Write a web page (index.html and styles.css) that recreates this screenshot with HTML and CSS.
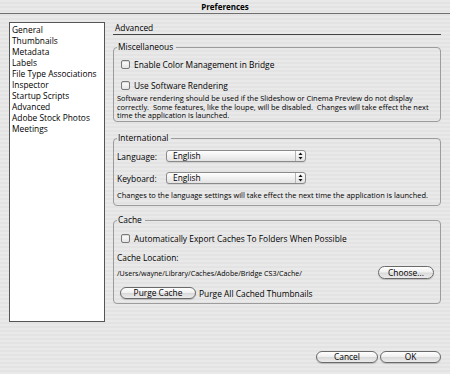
FILE: index.html
```html
<!DOCTYPE html>
<html>

<head>
    <title>Preferences</title>
    <link rel="stylesheet" href="styles.css">
</head>

<body>
    <div id="window">
        <div id="titlebar">Preferences</div>

        <div id="main">
            <ul id="sidebar">
                <li>General</li>
                <li>Thumbnails</li>
                <li>Metadata</li>
                <li>Labels</li>
                <li>File Type Associations</li>
                <li>Inspector</li>
                <li>Startup Scripts</li>
                <li>Advanced</li>
                <li>Adobe Stock Photos</li>
                <li>Meetings</li>
            </ul>

            <div id="panel">
                <div class="panel-title">Advanced</div>

                <fieldset class="group group-misc">
                    <legend>Miscellaneous</legend>
                    <div class="check-row first"><span class="checkbox"></span>Enable Color Management in Bridge</div>
                    <div class="check-row second"><span class="checkbox"></span>Use Software Rendering</div>
                    <p class="note note-misc">Software rendering should be used if the Slideshow or Cinema Preview do not display<br>correctly.&nbsp; Some features, like the loupe, will be disabled.&nbsp; Changes will take effect the next<br>time the application is launched.</p>
                </fieldset>

                <fieldset class="group group-intl">
                    <legend>International</legend>
                    <div class="field-row first">
                        <span class="field-label">Language:</span>
                        <div class="select">
                            <span class="select-value">English</span>
                            <span class="stepper">
                                <svg width="5" height="8" viewBox="0 0 5 8">
                                    <path d="M2.5 0.5 L4.5 3 L0.5 3 Z" fill="#111" />
                                    <path d="M0.5 5 L4.5 5 L2.5 7.5 Z" fill="#111" />
                                </svg>
                            </span>
                        </div>
                    </div>
                    <div class="field-row second">
                        <span class="field-label">Keyboard:</span>
                        <div class="select">
                            <span class="select-value">English</span>
                            <span class="stepper">
                                <svg width="5" height="8" viewBox="0 0 5 8">
                                    <path d="M2.5 0.5 L4.5 3 L0.5 3 Z" fill="#111" />
                                    <path d="M0.5 5 L4.5 5 L2.5 7.5 Z" fill="#111" />
                                </svg>
                            </span>
                        </div>
                    </div>
                    <p class="note note-intl">Changes to the language settings will take effect the next time the application is launched.</p>
                </fieldset>

                <fieldset class="group group-cache">
                    <legend>Cache</legend>
                    <div class="check-row first"><span class="checkbox"></span>Automatically Export Caches To Folders When Possible</div>
                    <div class="cache-label">Cache Location:</div>
                    <div class="path-row">
                        <span class="path">/Users/wayne/Library/Caches/Adobe/Bridge CS3/Cache/</span>
                        <button class="pill btn-choose">Choose...</button>
                    </div>
                    <div class="purge-row">
                        <button class="pill btn-purge">Purge Cache</button>
                        <span class="purge-text">Purge All Cached Thumbnails</span>
                    </div>
                </fieldset>
            </div>
        </div>

        <div id="footer">
            <button class="pill btn-cancel">Cancel</button>
            <button class="pill btn-ok">OK</button>
        </div>
    </div>
</body>

</html>
```

FILE: styles.css
```css
* {
    box-sizing: border-box;
}

body {
    margin: 0;
    overflow: hidden;
    font-family: "Open Sans", "Liberation Sans", sans-serif;
    font-size: 8.4px;
    color: #000;
}

#window {
    width: 450px;
    height: 374px;
    background: repeating-linear-gradient(to bottom, #e9e9e9 0, #e9e9e9 2px, #e3e3e3 2px, #e3e3e3 4px);
}

#titlebar {
    height: 14px;
    line-height: 13px;
    text-align: center;
    font-weight: bold;
    font-size: 8px;
    border-bottom: 1px solid #6e6e6e;
}

#main {
    display: flex;
    padding: 8px 9px 0 9px;
}

/* list of preference pages */
#sidebar {
    width: 96px;
    height: 300px;
    margin: 0;
    padding: 1px 0 0 2px;
    list-style: none;
    background: #fff;
    border: 1px solid #555;
}

#sidebar li {
    line-height: 11px;
    white-space: nowrap;
}

#panel {
    margin-left: 8px;
    width: 328px;
}

.panel-title {
    height: 13px;
    line-height: 12px;
    padding-left: 2px;
    border-bottom: 1px solid #444;
}

.group {
    margin: 0;
    padding: 0 6px 0 3px;
    border: 1px solid #9c9c9c;
    border-radius: 4px;
    min-width: 0;
}

.group legend {
    padding: 0 3px 0 1px;
    line-height: 10px;
    height: 10px;
}

.group-misc {
    margin-top: 7px;
}

.group-intl {
    margin-top: 11px;
}

.group-cache {
    margin-top: 9px;
}

.check-row {
    display: flex;
    align-items: center;
    height: 12px;
    white-space: nowrap;
}

.checkbox {
    width: 9px;
    height: 9px;
    margin: 0 4px 0 4px;
    border: 1px solid #7a7a7a;
    border-radius: 2px;
    background: linear-gradient(#fff, #e4e4e4);
    box-shadow: inset 0 1px 1px rgba(0, 0, 0, 0.15);
}

.group-misc .check-row.first {
    margin-top: 6px;
}

.group-misc .check-row.second {
    margin-top: 9px;
}

.note {
    margin: 0;
    font-size: 7.45px;
    line-height: 8.7px;
    white-space: nowrap;
}

.note-misc {
    margin: 3px 0 1px 0;
}

.field-row {
    display: flex;
    align-items: center;
    height: 12px;
}

.group-intl .field-row.first {
    margin-top: 7px;
}

.group-intl .field-row.second {
    margin-top: 10px;
}

.field-label {
    width: 49px;
}

.select {
    display: flex;
    width: 140px;
    height: 12px;
    border: 1px solid #8a8a8a;
    border-radius: 3px;
    background: linear-gradient(#ffffff, #f1f1f1 50%, #e3e3e3);
    box-shadow: 0 1px 0 rgba(0, 0, 0, 0.08);
}

.select-value {
    flex: 1;
    padding-left: 6px;
    line-height: 10px;
}

.stepper {
    width: 10px;
    border-left: 1px solid #b5b5b5;
    display: flex;
    align-items: center;
    justify-content: center;
}

.note-intl {
    margin: 7px 0 5px 0;
    line-height: 9px;
}

.group-cache .check-row.first {
    margin-top: 7px;
}

.cache-label {
    margin-top: 9px;
    line-height: 10px;
}

.path-row {
    display: flex;
    align-items: center;
    justify-content: space-between;
    height: 13px;
    margin-top: 3px;
}

.path {
    font-size: 7.1px;
}

.purge-row {
    display: flex;
    align-items: center;
    height: 12px;
    margin: 8px 0 4px 0;
}

.purge-text {
    margin-left: 3px;
}

/* aqua style pill buttons */
.pill {
    padding: 0;
    font-family: inherit;
    font-size: 8.4px;
    color: #000;
    border: 1px solid #6a6a6a;
    border-radius: 7px;
    background: linear-gradient(#ffffff, #f0f0f0 45%, #dadada 55%, #ececec);
    box-shadow: 0 1px 1px rgba(0, 0, 0, 0.18);
    line-height: 10px;
}

.btn-choose {
    width: 56px;
    height: 13px;
}

.btn-purge {
    width: 76px;
    height: 12px;
    margin-left: 3px;
}

#footer {
    display: flex;
    justify-content: flex-end;
    gap: 2px;
    padding-right: 9px;
    margin-top: 29px;
}

.btn-cancel {
    width: 62px;
    height: 12px;
}

.btn-ok {
    width: 61px;
    height: 12px;
}
```
